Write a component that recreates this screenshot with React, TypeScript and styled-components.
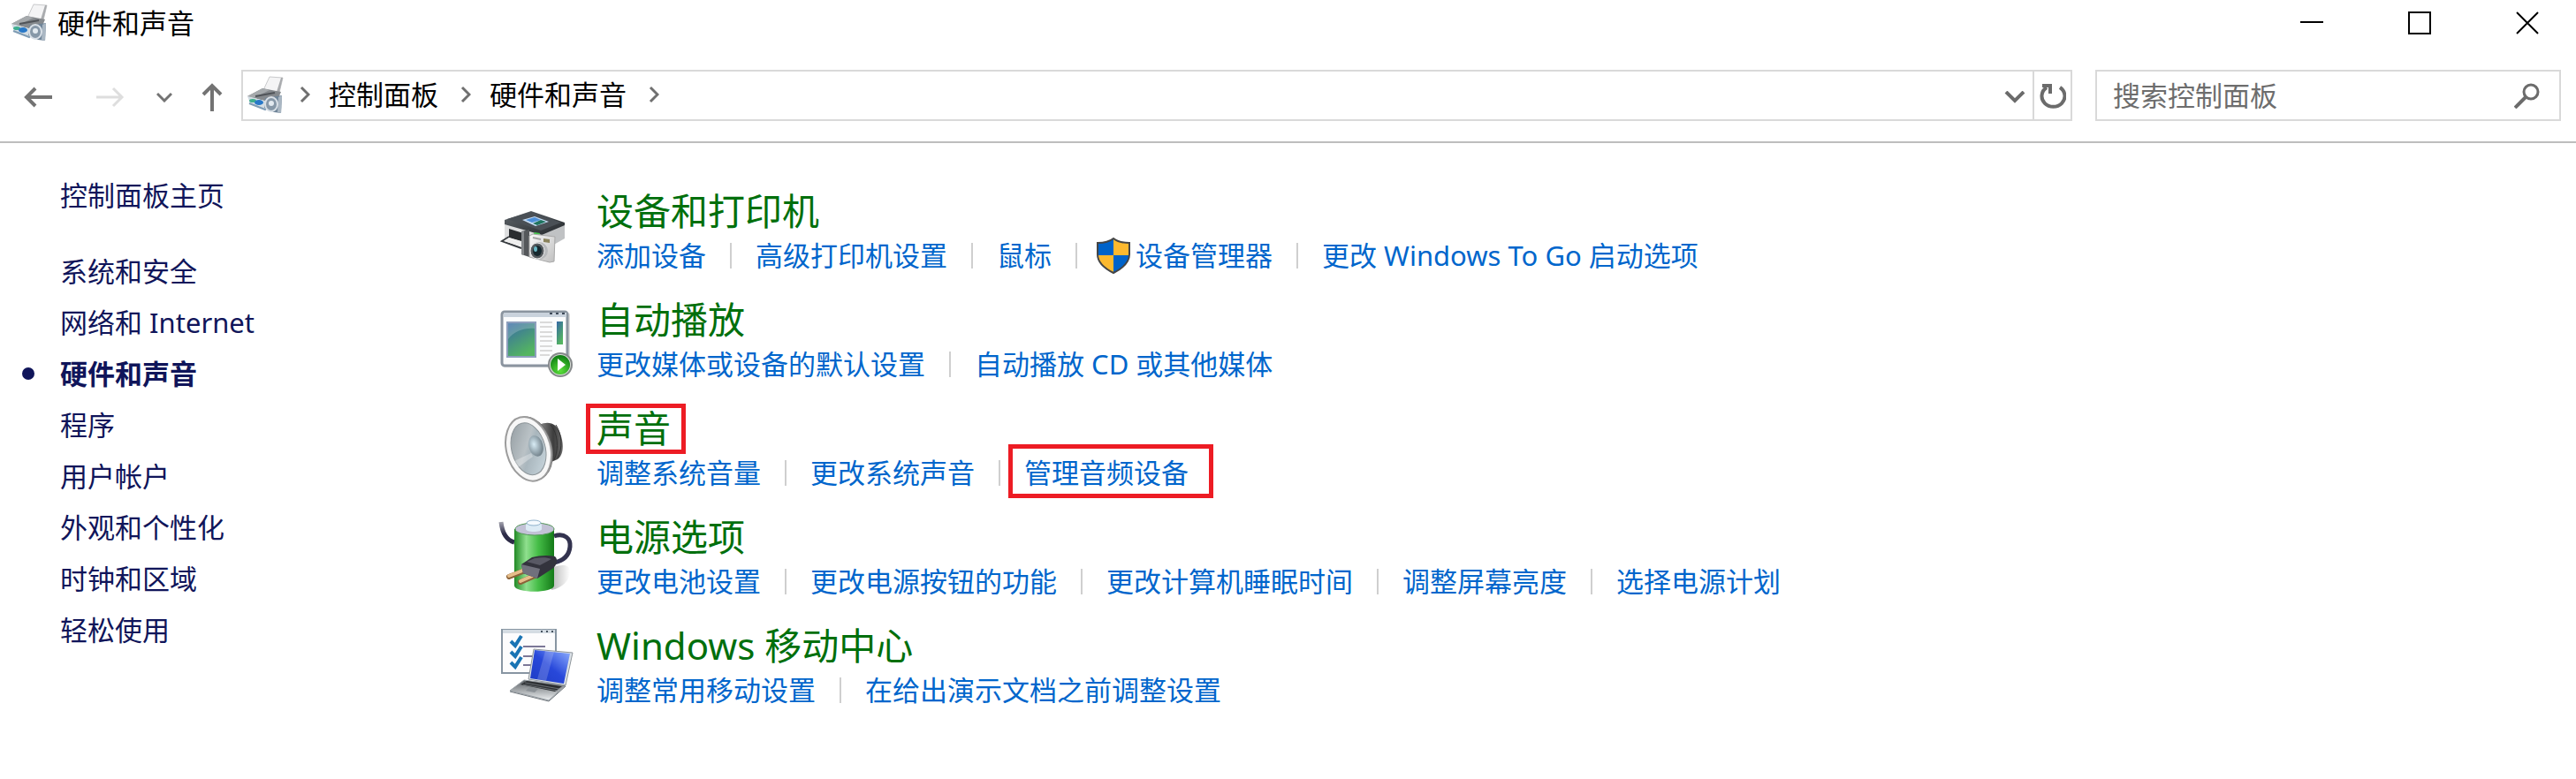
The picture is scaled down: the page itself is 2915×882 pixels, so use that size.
import React from "react";
import styled, { createGlobalStyle, css } from "styled-components";

const GlobalStyle = createGlobalStyle`
  * { box-sizing: border-box; }
  body {
    margin: 0;
    background: #ffffff;
    color: #000000;
    font-family: "Noto Sans", "Noto Sans CJK SC", sans-serif;
    font-size: 31px;
    line-height: 40px;
  }
  button { font: inherit; color: inherit; background: none; border: 0; padding: 0; cursor: pointer; }
  a { color: inherit; text-decoration: none; }
  ul { list-style: none; margin: 0; padding: 0; }
  svg { display: block; flex: none; }
`;

const Page = styled.div`
  display: flex;
  flex-direction: column;
  min-height: 100vh;
`;

const TitleBar = styled.header`
  display: flex;
  align-items: center;
  height: 53px;
  padding: 0 42px 2px 12px;
`;

const WindowTitle = styled.h1`
  margin: 0 0 0 11px;
  font-size: 31px;
  font-weight: 400;
`;

const WindowControls = styled.div`
  display: flex;
  gap: 96px;
  margin-left: auto;
`;

const NavBar = styled.nav`
  display: flex;
  align-items: stretch;
  height: 109px;
  padding: 26px 17px 23px 2px;
  border-bottom: 2px solid #bdbdbd;
`;

const NavButton = styled.button<{ $width: number }>`
  display: flex;
  align-items: center;
  justify-content: center;
  width: ${(p) => p.$width}px;
  padding-top: 4px;
`;

const AddressBar = styled.div`
  display: flex;
  align-items: center;
  flex: 1;
  min-width: 0;
  margin-right: 26px;
  padding-left: 4px;
  border: 2px solid #d9d9d9;
`;

const Crumbs = styled.div`
  display: flex;
  align-items: center;
  margin-left: 18px;
  margin-right: auto;
  padding-bottom: 2px;
  white-space: nowrap;
`;

const Crumb = styled.a`
  padding: 0 25px 0 21px;
`;

const AddressButton = styled.button<{ $divided?: boolean }>`
  display: flex;
  align-items: center;
  justify-content: center;
  align-self: stretch;
  width: 40px;
  padding-top: 4px;
  ${(p) =>
    p.$divided &&
    css`
      width: 43px;
      border-left: 2px solid #d9d9d9;
    `}
`;

const SearchBox = styled.form`
  display: flex;
  align-items: center;
  flex: 0 1 527px;
  border: 2px solid #d9d9d9;
  padding: 0 21px 0 18px;
`;

const SearchInput = styled.input`
  flex: 1;
  min-width: 0;
  height: 40px;
  padding: 0;
  border: 0;
  outline: 0;
  background: none;
  font: inherit;
  &::placeholder {
    color: #6d6d6d;
    opacity: 1;
  }
`;

const Body = styled.div`
  display: flex;
  align-items: flex-start;
`;

const Sidebar = styled.aside`
  flex: 0 0 562px;
  padding: 39px 0 40px 25px;
  color: #10155a;
`;

const SideList = styled.ul`
  display: flex;
  flex-direction: column;
  gap: 18px;
  & + & {
    margin-top: 46px;
  }
`;

const SideItem = styled.li<{ $current?: boolean }>`
  display: flex;
  align-items: center;
  font-weight: ${(p) => (p.$current ? 700 : 400)};
  &::before {
    content: "";
    width: 14px;
    height: 14px;
    margin-right: 29px;
    border-radius: 50%;
    background: ${(p) => (p.$current ? "#10155a" : "transparent")};
  }
`;

const Main = styled.main`
  display: flex;
  flex-direction: column;
  flex: 1;
  gap: 22px;
  padding: 49px 40px 40px 0;
`;

const Category = styled.section`
  display: flex;
  gap: 23px;
  & > svg {
    margin-top: 6px;
  }
`;

const highlight = css<{ $inset: string }>`
  position: relative;
  &::after {
    content: "";
    position: absolute;
    inset: ${(p) => p.$inset};
    border: 5px solid #ed1c24;
    pointer-events: none;
  }
`;

const Heading = styled.h2`
  margin: 0;
  height: 55px;
  font-size: 42px;
  font-weight: 400;
  line-height: 56px;
  color: #006f0c;
`;

const HeadingLink = styled.a<{ $marked?: boolean }>`
  display: inline-block;
  ${(p) => p.$marked && highlight}
`;

const TaskList = styled.ul`
  display: flex;
  flex-wrap: wrap;
  min-height: 46px;
  color: #0066cc;
`;

const TaskItem = styled.li`
  display: flex;
  align-items: center;
  white-space: nowrap;
  & + &::before {
    content: "";
    width: 2px;
    height: 29px;
    margin: 0 27px;
    background: #cfcfcf;
  }
`;

const TaskLink = styled.a<{ $marked?: boolean }>`
  display: flex;
  align-items: center;
  height: 46px;
  ${(p) => p.$marked && highlight}
  & > svg {
    margin: 0 5px 0 -6px;
  }
`;

const DeviceIcon = () => (
  <svg width="42" height="44" viewBox="0 0 42 44" aria-hidden="true">
    <polygon points="26,1 41,2 37,19 19,16" fill="#f4f4f5" stroke="#c9cacc" strokeWidth="1" />
    <path d="M41 2l-4 17-3-1 5-16z" fill="#a9abae" />
    <polygon points="1,23 18,14 39,18 36,25 20,28" fill="#85898d" />
    <polygon points="1,23 18,14 26,16 8,25" fill="#a5a9ac" />
    <path d="M10 23l22-4" stroke="#505459" strokeWidth="2" />
    <polygon points="1,23 20,28 24,38 4,31" fill="#d3dde4" />
    <ellipse cx="7" cy="28" rx="4" ry="2" fill="#3fae8f" />
    <ellipse cx="14" cy="30" rx="5" ry="3" fill="#2878c8" />
    <path d="M3 31l18 7 2-2" stroke="#7f9cb4" strokeWidth="2" fill="none" />
    <polygon points="21,25 40,22 39,42 31,41 20,36" fill="#6f8498" />
    <polygon points="36,24 40,22 39,42 35,41" fill="#aab7c3" />
    <ellipse cx="28" cy="32" rx="7" ry="8" fill="#8798a8" stroke="#d9e0e7" strokeWidth="2" />
    <ellipse cx="28" cy="31" rx="3" ry="3" fill="#e3eaf0" />
  </svg>
);

const ShieldIcon = () => (
  <svg width="40" height="42" viewBox="0 0 40 42" aria-hidden="true">
    <defs>
      <clipPath id="shieldShape">
        <path d="M20 2C15 6 9 7 2 7v13c0 9 8 16 18 21 10-5 18-12 18-21V7c-7 0-13-1-18-5z" />
      </clipPath>
    </defs>
    <g clipPath="url(#shieldShape)">
      <path d="M0 0h20v21H0zM20 21h20v21H20z" fill="#0063c9" />
      <path d="M20 0h20v21H20zM0 21h20v21H0z" fill="#fdb92e" />
    </g>
    <path
      d="M20 2C15 6 9 7 2 7v13c0 9 8 16 18 21 10-5 18-12 18-21V7c-7 0-13-1-18-5z"
      fill="none"
      stroke="#454545"
      strokeWidth="2"
    />
  </svg>
);

const PrinterIcon = () => (
  <svg width="90" height="90" viewBox="0 0 90 90" aria-hidden="true">
    <defs>
      <linearGradient id="prTop" x1="0" y1="0" x2="1" y2="1">
        <stop offset="0" stopColor="#60666b" />
        <stop offset="1" stopColor="#24282c" />
      </linearGradient>
      <linearGradient id="prCam" x1="0" y1="0" x2="1" y2="1">
        <stop offset="0" stopColor="#fafafa" />
        <stop offset="1" stopColor="#bfbfbf" />
      </linearGradient>
    </defs>
    <polygon points="9,34 50,46 50,66 9,53" fill="#dedfe0" />
    <polygon points="50,46 77,36 77,53 54,66 50,66" fill="#c0c2c4" />
    <polygon points="9,32 39,22 77,35 77,38 51,49 9,37" fill="url(#prTop)" />
    <polygon points="12,31 39,23 73,35 50,44" fill="#4a5056" />
    <polygon points="29,32 43,28 59,34 44,39" fill="#c6dcf4" />
    <polygon points="33,32 43,29 50,32 40,35" fill="#4c8fd8" />
    <polygon points="41,36 50,32 56,34 46,38" fill="#20745f" />
    <polygon points="14,42 30,47 30,57 14,52" fill="#2a2d30" />
    <path d="M14 51l-8 5 22 8" fill="none" stroke="#373b3f" strokeWidth="2" />
    <polygon points="14,52 28,56 28,62 8,56" fill="#eeeeee" />
    <polygon points="28,45 37,43 37,74 28,71" fill="#55585b" />
    <polygon points="28,45 31,44 31,72 28,71" fill="#86898c" />
    <polygon points="43,46 49,47 48,50 41,49" fill="#42c84a" />
    <polygon points="37,50 41,48 66,51 65,79 60,80 37,74" fill="url(#prCam)" stroke="#a8a8a8" strokeWidth="1" />
    <polygon points="53,53 60,54 60,58 53,57" fill="#8b845d" />
    <path d="M41 52l9 2" stroke="#a4a4a4" strokeWidth="2" />
    <ellipse cx="48" cy="67" rx="10" ry="10" fill="#b8babc" />
    <ellipse cx="46" cy="67" rx="8" ry="9" fill="#555a5e" stroke="#eeeeee" strokeWidth="1" />
    <ellipse cx="46" cy="67" rx="5" ry="6" fill="#16282e" />
    <ellipse cx="44" cy="65" rx="2" ry="3" fill="#69b6c3" />
  </svg>
);

const AutoPlayIcon = () => (
  <svg width="90" height="90" viewBox="0 0 90 90" aria-hidden="true">
    <defs>
      <linearGradient id="apPane" x1="0" y1="0" x2="0.5" y2="1">
        <stop offset="0" stopColor="#3668a8" />
        <stop offset="1" stopColor="#54b560" />
      </linearGradient>
      <radialGradient id="apPlay" cx="0.5" cy="0.8" r="0.8">
        <stop offset="0" stopColor="#5be03a" />
        <stop offset="1" stopColor="#0b7a12" />
      </radialGradient>
    </defs>
    <rect x="7" y="14" width="76" height="62" rx="3" fill="#dcdcdc" />
    <rect x="6" y="13" width="74" height="61" rx="3" fill="#fbfcfd" stroke="#8a949f" strokeWidth="3" />
    <rect x="8" y="14" width="71" height="5" fill="#c9d2dc" />
    <path d="M60 15h3M67 15h3M74 15h3" stroke="#3f4a59" strokeWidth="2" />
    <rect x="12" y="25" width="32" height="39" fill="url(#apPane)" stroke="#8e9fbd" strokeWidth="2" />
    <path d="M13 44c7-9 18-13 30-12v-6H13z" fill="#ffffff" opacity="0.2" />
    <path d="M49 25h14M49 30h14M49 36h14M49 41h14M49 46h14M49 52h14M49 57h14M49 62h11" stroke="#dadada" strokeWidth="2" />
    <rect x="68" y="24" width="7" height="26" fill="url(#apPane)" />
    <circle cx="72" cy="73" r="14" fill="#85898a" />
    <circle cx="72" cy="73" r="12" fill="#d8dcd7" />
    <circle cx="72" cy="73" r="11" fill="url(#apPlay)" />
    <path d="M69 66v14l9-7z" fill="#ffffff" />
  </svg>
);

const SpeakerIcon = () => (
  <svg width="90" height="90" viewBox="0 0 90 90" aria-hidden="true">
    <defs>
      <linearGradient id="spDrum" x1="0" y1="0" x2="1" y2="0">
        <stop offset="0" stopColor="#8b8b8b" />
        <stop offset="0.6" stopColor="#3d3d3d" />
        <stop offset="1" stopColor="#6a6a6a" />
      </linearGradient>
      <linearGradient id="spCone" x1="0" y1="0" x2="1" y2="1">
        <stop offset="0" stopColor="#8f989d" />
        <stop offset="0.45" stopColor="#bac2c6" />
        <stop offset="0.55" stopColor="#a9b6bd" />
        <stop offset="1" stopColor="#cfdde4" />
      </linearGradient>
      <radialGradient id="spCap" cx="0.4" cy="0.4" r="0.7">
        <stop offset="0" stopColor="#d8ecf5" />
        <stop offset="1" stopColor="#64737c" />
      </radialGradient>
    </defs>
    <path d="M48 18c12-5 20-1 24 10 5 13 3 25-3 29l-12 5z" fill="url(#spDrum)" />
    <path d="M61 18c8 9 10 26 4 40M67 18c7 11 8 26 2 38" stroke="#333333" strokeWidth="1" fill="none" />
    <g transform="rotate(-15 37 45)">
      <ellipse cx="38" cy="45" rx="25" ry="37" fill="#666666" />
      <ellipse cx="36" cy="45" rx="25" ry="37" fill="#f7f7f7" stroke="#9c9c9c" strokeWidth="2" />
      <ellipse cx="36" cy="45" rx="19" ry="30" fill="url(#spCone)" stroke="#8c9498" strokeWidth="1" />
      <ellipse cx="45" cy="44" rx="8" ry="12" fill="url(#spCap)" />
    </g>
    <path d="M18 60l21-10 2 4-18 13z" fill="#ffffff" opacity="0.3" />
  </svg>
);

const BatteryIcon = () => (
  <svg width="90" height="90" viewBox="0 0 90 90" aria-hidden="true">
    <defs>
      <linearGradient id="btCell" x1="0" y1="0" x2="1" y2="0">
        <stop offset="0" stopColor="#218a25" />
        <stop offset="0.3" stopColor="#8fdf8e" />
        <stop offset="0.6" stopColor="#45bd47" />
        <stop offset="1" stopColor="#147a18" />
      </linearGradient>
      <linearGradient id="btCord" x1="0" y1="0" x2="0" y2="1">
        <stop offset="0" stopColor="#a2a2ad" />
        <stop offset="0.6" stopColor="#2c2b47" />
      </linearGradient>
      <linearGradient id="btShade" x1="0" y1="0" x2="1" y2="0">
        <stop offset="0" stopColor="#9a9a9a" />
        <stop offset="1" stopColor="#ffffff" />
      </linearGradient>
    </defs>
    <path d="M64 56c13-4 19-2 19 5 0 10-9 19-21 21z" fill="url(#btShade)" opacity="0.7" />
    <path d="M5 5c1 9 4 20 15 23" stroke="url(#btCord)" strokeWidth="5" fill="none" />
    <path d="M20 13v64c0 9 45 9 45 0V13z" fill="url(#btCell)" />
    <ellipse cx="43" cy="13" rx="22" ry="7" fill="#c2c2d6" stroke="#55975a" strokeWidth="1" />
    <path d="M33 9c0-6 18-6 18 0v4c0 4-18 4-18 0z" fill="#dcebf5" />
    <ellipse cx="42" cy="6" rx="8" ry="3" fill="#f5fafe" stroke="#91b3cc" strokeWidth="1" />
    <path d="M65 21c12-4 19 3 18 12-1 10-8 16-18 18" stroke="#33334f" strokeWidth="5" fill="none" />
    <path d="M32 60l-18 7M45 65l-18 8" stroke="#8b6238" strokeWidth="6" strokeLinecap="round" />
    <path d="M32 59l-18 7M45 64l-18 8" stroke="#e6bd89" strokeWidth="4" strokeLinecap="round" />
    <path d="M28 53l12-8c8-2 18-3 26-1 4 4 2 10-3 14l-17 11-16-6z" fill="#33333d" />
    <path d="M28 53l21 5-3 11-16-6z" fill="#70707c" />
    <path d="M34 50l9-4c8-1 14-1 19 1l-13 7z" fill="#595965" />
  </svg>
);

const MobilityIcon = () => (
  <svg width="90" height="90" viewBox="0 0 90 90" aria-hidden="true">
    <defs>
      <linearGradient id="mbScreen" x1="0" y1="1" x2="1" y2="0">
        <stop offset="0" stopColor="#1e3bc4" />
        <stop offset="0.5" stopColor="#2848da" />
        <stop offset="1" stopColor="#8fb0ff" />
      </linearGradient>
      <linearGradient id="mbBase" x1="0" y1="0" x2="0" y2="1">
        <stop offset="0" stopColor="#5b6064" />
        <stop offset="1" stopColor="#eef1f3" />
      </linearGradient>
    </defs>
    <rect x="6" y="4" width="61" height="49" fill="#fcfcfd" stroke="#8795a2" strokeWidth="2" />
    <rect x="7" y="4" width="59" height="4" fill="#d4dce3" />
    <path d="M50 6h2M56 6h2M62 6h2" stroke="#46525f" strokeWidth="2" />
    <path d="M30 23h25M30 34h14M30 44h10" stroke="#7b7797" strokeWidth="2" />
    <path d="M16 17l5 5 7-11M16 29l5 5 7-11M16 41l5 5 7-11" stroke="#1974b4" strokeWidth="4" fill="none" />
    <polygon points="42,26 86,30 78,67 36,60" fill="#dce2e7" stroke="#8e959b" strokeWidth="1" />
    <polygon points="43,27 83,31 76,65 38,59" fill="url(#mbScreen)" />
    <polygon points="55,28 65,29 56,62 46,60" fill="#ffffff" opacity="0.18" />
    <polygon points="31,61 78,67 59,84 15,73" fill="url(#mbBase)" stroke="#969da3" strokeWidth="1" />
    <polygon points="34,62 74,68 66,74 27,66" fill="#2b2e31" />
    <polygon points="37,69 47,71 43,75 33,73" fill="#8c9297" />
    <path d="M30 66l39 7M32 64l39 7" stroke="#6a6f74" strokeWidth="1" />
    <path d="M15 74l44 11 19-17" stroke="#6f767c" strokeWidth="1" fill="none" />
  </svg>
);

const CrumbChevron = () => (
  <svg width="12" height="20" viewBox="0 0 12 20" fill="none" stroke="#6f6f6f" strokeWidth="3" aria-hidden="true">
    <path d="M2 2l8 8-8 8" />
  </svg>
);

type Task = { label: string; shield?: boolean; marked?: boolean };
type CategoryData = { title: string; icon: React.ReactNode; marked?: boolean; tasks: Task[] };

const sideLinks = [
  "系统和安全",
  "网络和 Internet",
  "硬件和声音",
  "程序",
  "用户帐户",
  "外观和个性化",
  "时钟和区域",
  "轻松使用",
];

const categories: CategoryData[] = [
  {
    title: "设备和打印机",
    icon: <PrinterIcon />,
    tasks: [
      { label: "添加设备" },
      { label: "高级打印机设置" },
      { label: "鼠标" },
      { label: "设备管理器", shield: true },
      { label: "更改 Windows To Go 启动选项" },
    ],
  },
  {
    title: "自动播放",
    icon: <AutoPlayIcon />,
    tasks: [{ label: "更改媒体或设备的默认设置" }, { label: "自动播放 CD 或其他媒体" }],
  },
  {
    title: "声音",
    icon: <SpeakerIcon />,
    marked: true,
    tasks: [{ label: "调整系统音量" }, { label: "更改系统声音" }, { label: "管理音频设备", marked: true }],
  },
  {
    title: "电源选项",
    icon: <BatteryIcon />,
    tasks: [
      { label: "更改电池设置" },
      { label: "更改电源按钮的功能" },
      { label: "更改计算机睡眠时间" },
      { label: "调整屏幕亮度" },
      { label: "选择电源计划" },
    ],
  },
  {
    title: "Windows 移动中心",
    icon: <MobilityIcon />,
    tasks: [{ label: "调整常用移动设置" }, { label: "在给出演示文档之前调整设置" }],
  },
];

export default function App() {
  return (
    <Page lang="zh-CN">
      <GlobalStyle />
      <TitleBar>
        <DeviceIcon />
        <WindowTitle>硬件和声音</WindowTitle>
        <WindowControls>
          <button type="button" aria-label="最小化">
            <svg width="26" height="26" viewBox="0 0 26 26" fill="none" stroke="#000" strokeWidth="2">
              <path d="M0 12h26" />
            </svg>
          </button>
          <button type="button" aria-label="最大化">
            <svg width="26" height="26" viewBox="0 0 26 26" fill="none" stroke="#000" strokeWidth="2">
              <rect x="1" y="1" width="24" height="24" />
            </svg>
          </button>
          <button type="button" aria-label="关闭">
            <svg width="26" height="26" viewBox="0 0 26 26" fill="none" stroke="#000" strokeWidth="2">
              <path d="M1 1l24 24M25 1L1 25" />
            </svg>
          </button>
        </WindowControls>
      </TitleBar>

      <NavBar aria-label="导航">
        <NavButton type="button" $width={82} aria-label="后退">
          <svg width="32" height="24" viewBox="0 0 32 24" fill="none" stroke="#737373" strokeWidth="4">
            <path d="M32 12H3M13 2L3 12l10 10" />
          </svg>
        </NavButton>
        <NavButton type="button" $width={81} aria-label="前进" disabled>
          <svg width="32" height="24" viewBox="0 0 32 24" fill="none" stroke="#dedede" strokeWidth="3">
            <path d="M0 12h29M19 2l10 10-10 10" />
          </svg>
        </NavButton>
        <NavButton type="button" $width={42} aria-label="最近浏览的位置">
          <svg width="18" height="12" viewBox="0 0 18 12" fill="none" stroke="#737373" strokeWidth="3">
            <path d="M1 2l8 8 8-8" />
          </svg>
        </NavButton>
        <NavButton type="button" $width={66} aria-label="上移">
          <svg width="24" height="32" viewBox="0 0 24 32" fill="none" stroke="#737373" strokeWidth="4">
            <path d="M12 32V3M2 13L12 3l10 10" />
          </svg>
        </NavButton>
        <AddressBar>
          <DeviceIcon />
          <Crumbs>
            <CrumbChevron />
            <Crumb href="#home">控制面板</Crumb>
            <CrumbChevron />
            <Crumb href="#hardware">硬件和声音</Crumb>
            <CrumbChevron />
          </Crumbs>
          <AddressButton type="button" aria-label="以前的位置">
            <svg width="24" height="14" viewBox="0 0 24 14" fill="none" stroke="#6b6b6b" strokeWidth="4">
              <path d="M2 1l10 10L22 1" />
            </svg>
          </AddressButton>
          <AddressButton type="button" $divided aria-label="刷新">
            <svg width="30" height="30" viewBox="0 0 30 30" fill="none" stroke="#6b6b6b" strokeWidth="4">
              <path d="M23 4A13 12 0 1 1 8 4M3 2h9v9" />
            </svg>
          </AddressButton>
        </AddressBar>
        <SearchBox role="search">
          <SearchInput type="search" placeholder="搜索控制面板" aria-label="搜索控制面板" />
          <svg width="30" height="30" viewBox="0 0 30 30" fill="none" stroke="#6b6b6b" strokeWidth="3" aria-hidden="true">
            <circle cx="19" cy="11" r="8" />
            <path d="M13 17L1 29" strokeWidth="4" />
          </svg>
        </SearchBox>
      </NavBar>

      <Body>
        <Sidebar>
          <SideList>
            <SideItem>
              <a href="#home">控制面板主页</a>
            </SideItem>
          </SideList>
          <SideList>
            {sideLinks.map((label) => (
              <SideItem key={label} $current={label === "硬件和声音"}>
                <a href="#category">{label}</a>
              </SideItem>
            ))}
          </SideList>
        </Sidebar>
        <Main>
          {categories.map((c) => (
            <Category key={c.title}>
              {c.icon}
              <div>
                <Heading>
                  <HeadingLink href="#section" $marked={c.marked} $inset="0 -17px -1px -12px">
                    {c.title}
                  </HeadingLink>
                </Heading>
                <TaskList>
                  {c.tasks.map((t) => (
                    <TaskItem key={t.label}>
                      <TaskLink href="#task" $marked={t.marked} $inset="-9px -28px -6px -18px">
                        {t.shield && <ShieldIcon />}
                        {t.label}
                      </TaskLink>
                    </TaskItem>
                  ))}
                </TaskList>
              </div>
            </Category>
          ))}
        </Main>
      </Body>
    </Page>
  );
}
